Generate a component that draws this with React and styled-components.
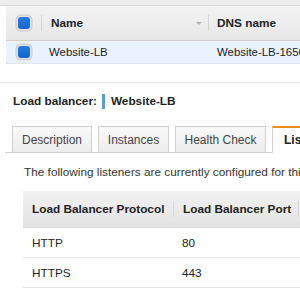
import React from 'react';
import styled, { createGlobalStyle } from 'styled-components';

const Global = createGlobalStyle`
	body {
		margin: 0;
		background: #fff;
		font-family: "Liberation Sans", Arial, Helvetica, sans-serif;
		color: #222;
		font-size: 11.8px;
	}
`;

const Page = styled.div`
	width: 300px;
	height: 293px;
	overflow: hidden;
`;

const TopBand = styled.div`
	height: 5px;
	background: #ececec;
	border-bottom: 1px solid #dadada;
`;

const Grid = styled.div`
	margin-left: 6px;
	width: 340px;
`;

const GridRow = styled.div`
	display: flex;
	align-items: center;
	height: ${p => (p.head ? '34px' : '22px')};
	background: ${p =>
		p.head ? 'linear-gradient(#f3f3f3, #e7e7e7)' : p.selected ? '#eaf3fd' : '#fff'};
	border-bottom: 1px solid ${p => (p.head ? '#d0d0d0' : '#dde4ec')};
	font-weight: ${p => (p.head ? 'bold' : 'normal')};
	font-size: ${p => (p.head ? '11.8px' : '11.4px')};
	white-space: nowrap;
`;

const BoxCell = styled.div`
	width: 34px;
	display: flex;
	justify-content: center;
	padding-left: 1px;
	border-right: ${p => (p.divided ? '1px solid #d4d4d4' : '1px solid transparent')};
	height: 16px;
	align-items: center;
`;

const Check = styled.span`
	width: 12px;
	height: 12px;
	border-radius: 3px;
	background: linear-gradient(#2b7ce6, #1664cc);
	box-shadow: 0 0 0 1.5px #e3e3e3, 0 0 0 2.5px #c9c9c9;
	display: block;
`;

const Cell = styled.div`
	width: ${p => p.w}px;
	padding-left: ${p => p.pl || 9}px;
	box-sizing: border-box;
	display: flex;
	align-items: center;
	justify-content: space-between;
	height: 16px;
	border-right: ${p => (p.divided ? '1px solid #d4d4d4' : 'none')};
`;

const SortArrow = styled.span`
	width: 0;
	height: 0;
	border-left: 3px solid transparent;
	border-right: 3px solid transparent;
	border-top: 3px solid #b5b5b5;
	margin-right: 6px;
`;

const Detail = styled.div`
	margin-top: 18px;
	border-top: 1px solid #e4e4e4;
`;

const Title = styled.h2`
	margin: 0;
	padding: 10px 0 0 13px;
	font-size: 11.8px;
	font-weight: bold;
	display: flex;
	align-items: center;
	height: 16px;
`;

const Marker = styled.span`
	width: 3px;
	height: 15px;
	background: #5b9bd9;
	margin: 0 6px 0 5px;
`;

const Tabs = styled.div`
	display: flex;
	gap: 6px;
	margin: 17px 0 0 5px;
	padding-left: 7px;
	border-bottom: 1px solid #cfcfcf;
	height: 26px;
	white-space: nowrap;
`;

const Tab = styled.div`
	width: ${p => p.w}px;
	flex: none;
	box-sizing: border-box;
	border: 1px solid #cfcfcf;
	border-top: ${p => (p.active ? '2px solid #f08b1d' : '1px solid #cfcfcf')};
	border-bottom: ${p => (p.active ? '1px solid #fff' : 'none')};
	background: ${p => (p.active ? '#fff' : 'linear-gradient(#fafafa, #ececec)')};
	font-weight: ${p => (p.active ? 'bold' : 'normal')};
	color: ${p => (p.active ? '#222' : '#444')};
	padding: 0 0 0 ${p => (p.active ? 11 : 0)}px;
	display: flex;
	align-items: center;
	justify-content: ${p => (p.active ? 'flex-start' : 'center')};
	margin-bottom: ${p => (p.active ? '-1px' : '0')};
	font-size: 12px;
`;

const Intro = styled.p`
	margin: 12px 0 0 24px;
	white-space: nowrap;
	color: #333;
`;

const Listeners = styled.div`
	margin: 12px 0 0 23px;
	width: 320px;
`;

const LRow = styled.div`
	display: flex;
	align-items: center;
	height: ${p => (p.head ? '36px' : '29px')};
	background: ${p => (p.head ? 'linear-gradient(#f1f1f1, #e4e4e4)' : '#fff')};
	border-bottom: 1px solid ${p => (p.head ? '#d8d8d8' : '#e6e6e6')};
	font-weight: ${p => (p.head ? 'bold' : 'normal')};
	white-space: nowrap;
	color: #222;
`;

const LCell = styled.div`
	width: ${p => p.w}px;
	flex: none;
	box-sizing: border-box;
	padding-left: ${p => p.pl}px;
	height: 16px;
	display: flex;
	align-items: center;
	border-right: ${p => (p.divided ? '1px solid #d6d6d6' : 'none')};
`;

const listeners = [
	{ protocol: 'HTTP', port: '80' },
	{ protocol: 'HTTPS', port: '443' },
];

export default function App() {
	return (
		<Page>
			<Global />
			<TopBand />
			<Grid>
				<GridRow head>
					<BoxCell divided>
						<Check />
					</BoxCell>
					<Cell w={167} divided>
						Name
						<SortArrow />
					</Cell>
					<Cell w={120} pl={8}>DNS name</Cell>
				</GridRow>
				<GridRow selected>
					<BoxCell>
						<Check />
					</BoxCell>
					<Cell w={167} pl={7}>Website-LB</Cell>
					<Cell w={120} pl={8}>Website-LB-1650</Cell>
				</GridRow>
			</Grid>
			<Detail>
				<Title>
					Load balancer:
					<Marker />
					Website-LB
				</Title>
				<Tabs>
					<Tab w={80}>Description</Tab>
					<Tab w={71}>Instances</Tab>
					<Tab w={91}>Health Check</Tab>
					<Tab w={80} active>Listeners</Tab>
				</Tabs>
				<Intro>The following listeners are currently configured for this load balancer:</Intro>
				<Listeners>
					<LRow head>
						<LCell w={151} pl={9} divided>Load Balancer Protocol</LCell>
						<LCell w={125} pl={9} divided>Load Balancer Port</LCell>
						<LCell w={60} pl={9}>Instance Protocol</LCell>
					</LRow>
					{listeners.map(l => (
						<LRow key={l.protocol}>
							<LCell w={151} pl={9}>{l.protocol}</LCell>
							<LCell w={125} pl={8}>{l.port}</LCell>
						</LRow>
					))}
				</Listeners>
			</Detail>
		</Page>
	);
}
